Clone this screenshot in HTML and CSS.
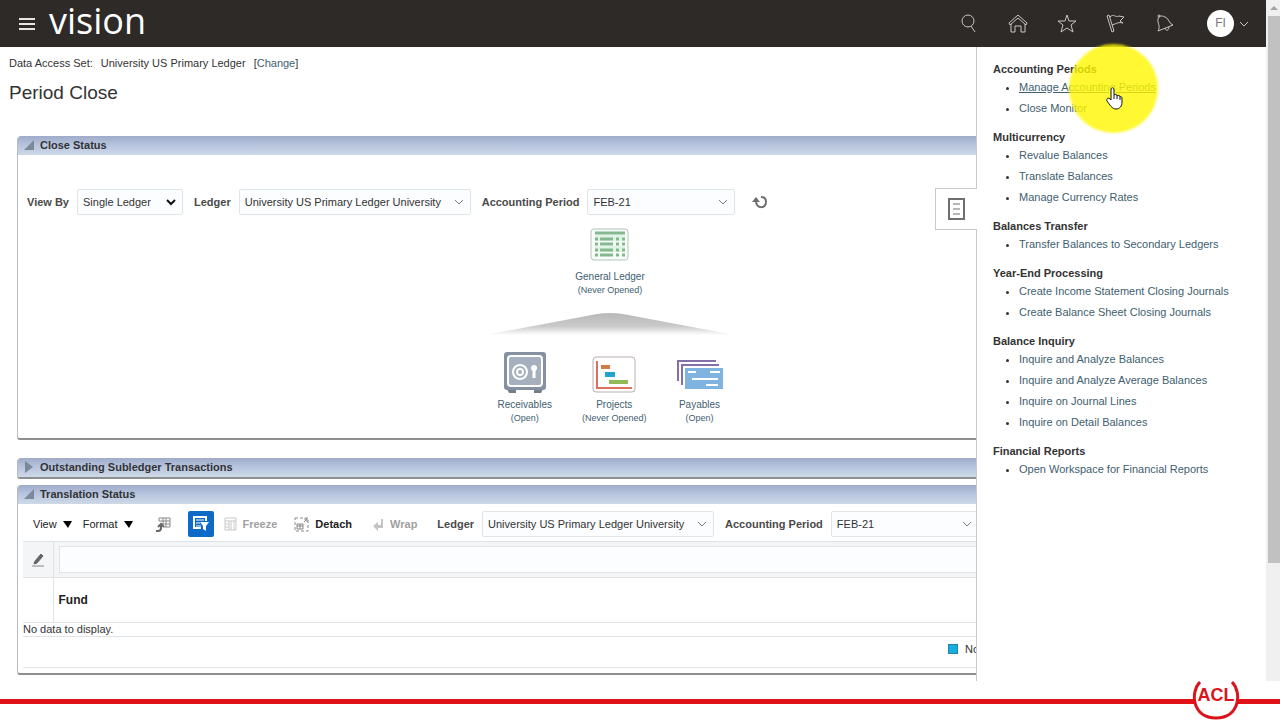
FILE: index.html
```html
<!DOCTYPE html>
<html lang="en">
<head>
<meta charset="utf-8">
<title>Period Close</title>
<link rel="stylesheet" href="styles.css">
</head>
<body>
<div class="viewport">
  <div class="app">
    <header class="topbar">
      <button class="icon-btn" aria-label="Navigator"><svg width="18" height="14" viewBox="0 0 18 14" stroke="#e8e6e4" stroke-width="2"><path d="M1 2h16M1 7h16M1 12h16"/></svg></button>
      <span class="brand">vision</span>
      <nav class="tools" aria-label="Global">
        <button class="icon-btn" aria-label="Search"><svg width="20" height="20" viewBox="0 0 20 20"><circle cx="9" cy="7" r="6"/><path d="M12 12l4 6"/></svg></button>
        <button class="icon-btn" aria-label="Home"><svg width="20" height="20" viewBox="0 0 20 20"><path d="M1 9l9-8 9 8-1 2-8-7-8 7zM3 10v8h4v-6h6v6h4v-8"/></svg></button>
        <button class="icon-btn" aria-label="Favorites"><svg width="20" height="20" viewBox="0 0 20 20"><path d="M10 1l2 6h7l-5 4 2 7-6-4-6 4 2-7-5-4h7z"/></svg></button>
        <button class="icon-btn" aria-label="Watchlist"><svg width="20" height="20" viewBox="0 0 20 20"><path d="M1 2l2-1 5 16-2 1zM4 3c4-4 5 1 9-1l5 1-4 4 3 2c-5-1-5 0-11 2"/></svg></button>
        <button class="icon-btn" aria-label="Notifications"><svg width="20" height="20" viewBox="0 0 20 20"><path d="M3 17l15-6c-4-1-4-7-8-8C6 1 4 2 3 5c-1 4 3 7 0 12zM10 14c1 4 4 2 4-1"/><circle cx="4" cy="2" r="1"/></svg></button>
        <button class="user" aria-label="Account menu"><span class="avatar">FI</span><svg width="10" height="6" viewBox="0 0 10 6"><path d="M1 1l4 4 4-4"/></svg></button>
      </nav>
    </header>
    <div class="content">
      <main class="main">
        <div class="access"><span>Data Access Set:</span><span>University US Primary Ledger</span><span>[<a href="#">Change</a>]</span></div>
        <h1>Period Close</h1>

        <section class="panel">
          <h2 class="bar"><svg width="10" height="10" viewBox="0 0 10 10"><path d="M10 0v10H0z" fill="#7d8898"/></svg>Close Status</h2>
          <div class="close-body">
            <div class="fields">
              <label for="viewby">View By</label>
              <span class="field field-s"><select id="viewby"><option>Single Ledger</option></select><svg class="chev dark" width="10" height="7" viewBox="0 0 10 7"><path d="M1 1l4 4 4-4"/></svg></span>
              <label class="spaced" for="ledger1">Ledger</label>
              <span class="field field-l"><input id="ledger1" value="University US Primary Ledger University"><button class="chev" aria-label="Open ledgers"><svg width="10" height="6" viewBox="0 0 10 6"><path d="M1 1l4 4 4-4"/></svg></button></span>
              <label class="spaced" for="period1">Accounting Period</label>
              <span class="field field-m"><input id="period1" value="FEB-21"><button class="chev" aria-label="Open periods"><svg width="10" height="6" viewBox="0 0 10 6"><path d="M1 1l4 4 4-4"/></svg></button></span>
              <button class="refresh" aria-label="Refresh"><svg width="16" height="14" viewBox="0 0 16 14"><path d="M4 6c0 8 10 8 10 1 0-3-2-5-5-5" fill="none" stroke="#6d6d6d" stroke-width="2"/><path d="M0 7l4-5 4 5z" fill="#6d6d6d"/></svg></button>
            </div>
            <div class="map">
              <a class="node" href="#">
                <svg width="40" height="34" viewBox="0 0 40 34"><rect x="1" y="1" width="37" height="31" rx="3" fill="#f7fdf8" stroke="#b7c1ba"/><g stroke="#e0f5e4" stroke-width="6"><path d="M5 10h30M5 21h30"/></g><g stroke="#84b990" stroke-width="3"><path d="M5 5h30"/><path d="M5 11h30M5 16h30M5 22h30M5 27h30" stroke-dasharray="3 2 13 3 3 3 3 9"/></g></svg>
                <span>General Ledger</span><small>(Never Opened)</small>
              </a>
              <svg class="roof" width="250" height="22" viewBox="0 0 250 22"><defs><linearGradient id="rg" x1="0" y1="0" x2="0" y2="1"><stop offset="0" stop-color="#b8b8b8"/><stop offset=".6" stop-color="#cacaca"/><stop offset="1" stop-color="#fff"/></linearGradient></defs><path d="M0 22L112 1q13-2 26 0l112 21z" fill="url(#rg)"/></svg>
              <div class="branches">
                <a class="node" href="#">
                  <svg width="42" height="42" viewBox="0 0 42 42"><path d="M3 37h9v4H5zM30 37h9l-2 4h-7z" fill="#737e8b"/><rect width="42" height="38" rx="3" fill="#8590a0"/><rect x="4" y="4" width="34" height="30" rx="3" fill="#a5afbd" stroke="#fff" stroke-width="2"/><g fill="none" stroke="#fff" stroke-width="2"><circle cx="16" cy="20" r="7"/><circle cx="16" cy="20" r="3"/></g><circle cx="30" cy="16" r="3" fill="#fff"/><path d="M30 17v9" stroke="#fff" stroke-width="3"/></svg>
                  <span>Receivables</span><small>(Open)</small>
                </a>
                <a class="node" href="#">
                  <svg width="44" height="38" viewBox="0 0 44 38"><rect x="1" y="1" width="42" height="35" rx="3" fill="#fff" stroke="#bcaeb0"/><path d="M5 5v27h35" fill="none" stroke="#dc6f5d" stroke-width="2"/><path d="M9 9h9v4H9z" fill="#cf7d46"/><path d="M13 16h10v5H13z" fill="#20a4cd"/><path d="M17 24h19v4H17z" fill="#8fba55"/></svg>
                  <span>Projects</span><small>(Never Opened)</small>
                </a>
                <a class="node" href="#">
                  <svg width="46" height="36" viewBox="0 0 46 36"><path d="M1 23V3h38M5 27V7h37" fill="none" stroke="#846fab" stroke-width="2"/><rect x="8" y="10" width="38" height="21" fill="#7eb4df"/><path d="M11 14h8M33 14h10M15 21h26M29 27h12" stroke="#fff" stroke-width="2"/></svg>
                  <span>Payables</span><small>(Open)</small>
                </a>
              </div>
            </div>
          </div>
        </section>

        <section class="panel">
          <h2 class="bar"><svg width="10" height="12" viewBox="0 0 10 12"><path d="M1 0l8 6-8 6z" fill="#7d8898"/></svg>Outstanding Subledger Transactions</h2>
        </section>

        <section class="panel">
          <h2 class="bar"><svg width="10" height="10" viewBox="0 0 10 10"><path d="M10 0v10H0z" fill="#7d8898"/></svg>Translation Status</h2>
          <div class="table-body">
            <div class="toolbar">
              <button class="menu">View<svg width="9" height="7" viewBox="0 0 9 7"><path d="M0 0h9L5 7z"/></svg></button>
              <button class="menu">Format<svg width="9" height="7" viewBox="0 0 9 7"><path d="M0 0h9L5 7z"/></svg></button>
              <button class="export" aria-label="Export"><svg width="15" height="15" viewBox="0 0 15 15" fill="none" stroke="#888"><path d="M3 4V1h11v9H8M3 4h11M7 1v6M10 1v9M6 7h8"/><path d="M0 14h2c2 0 3-1 3-3V8M2 10l3-3 3 3" stroke="#666" stroke-width="2"/></svg></button>
              <button class="filter" aria-label="Query by example"><svg width="16" height="16" viewBox="0 0 16 16" fill="none" stroke="#fff"><path d="M13 5V1H1v11h7" stroke-width="2"/><path d="M3 4h8M3 7h4M3 10h5"/><path d="M7 6h9l-3 4v5l-3-2v-3z" fill="#fff" stroke="none"/></svg></button>
              <button class="tool" disabled><svg width="13" height="14" viewBox="0 0 13 14" fill="none" stroke="#c9c9c9"><path d="M1 1h11v12H1zM1 4h11M1 7h4M1 10h4M5 4v9M7 4v9M10 4v9"/></svg>Freeze</button>
              <button class="tool strong"><svg width="15" height="15" viewBox="0 0 15 15" fill="none" stroke="#888"><path d="M1 1h13v13H1z" stroke-dasharray="3 2"/><path d="M3 7h6v5H3zM3 9h6M6 7v5M10 5l3-3M10 2h3v3"/></svg>Detach</button>
              <button class="tool last" disabled><svg width="12" height="13" viewBox="0 0 12 13"><path d="M9 1h2v9H6v3L1 8l5-4v3h3z" fill="#c4c4c4"/></svg>Wrap</button>
              <label for="ledger2">Ledger</label>
              <span class="field field-l"><input id="ledger2" value="University US Primary Ledger University"><button class="chev" aria-label="Open ledgers"><svg width="10" height="6" viewBox="0 0 10 6"><path d="M1 1l4 4 4-4"/></svg></button></span>
              <label class="spaced" for="period2">Accounting Period</label>
              <span class="field field-m"><input id="period2" value="FEB-21"><button class="chev" aria-label="Open periods"><svg width="10" height="6" viewBox="0 0 10 6"><path d="M1 1l4 4 4-4"/></svg></button></span>
            </div>
            <table class="grid">
              <thead>
                <tr class="qbe"><td class="sel"><button aria-label="Clear filter"><svg width="12" height="14" viewBox="0 0 12 14"><path d="M9 1l2 2-6 7-3 1 1-3z" fill="#666" stroke="#666"/><path d="M0 13h12" stroke="#888"/></svg></button></td><td><input aria-label="Filter by fund"></td></tr>
                <tr class="head"><td class="sel"></td><th scope="col">Fund</th></tr>
              </thead>
              <tbody><tr><td class="empty" colspan="2">No data to display.</td></tr></tbody>
            </table>
            <div class="legend"><i></i>No</div>
          </div>
        </section>
      </main>

      <aside class="drawer">
        <button class="drawer-tab" aria-label="Tasks"><svg width="17" height="22" viewBox="0 0 17 22" fill="none" stroke="#6f6f6f" stroke-width="2"><path d="M1 1h15v20H1z"/><path d="M5 6h7M5 11h7M5 16h7" stroke-width="1"/></svg></button>
        <h3>Accounting Periods</h3>
        <ul><li><a class="active" href="#">Manage Accounting Periods</a></li><li><a href="#">Close Monitor</a></li></ul>
        <h3>Multicurrency</h3>
        <ul><li><a href="#">Revalue Balances</a></li><li><a href="#">Translate Balances</a></li><li><a href="#">Manage Currency Rates</a></li></ul>
        <h3>Balances Transfer</h3>
        <ul><li><a href="#">Transfer Balances to Secondary Ledgers</a></li></ul>
        <h3>Year-End Processing</h3>
        <ul><li><a href="#">Create Income Statement Closing Journals</a></li><li><a href="#">Create Balance Sheet Closing Journals</a></li></ul>
        <h3>Balance Inquiry</h3>
        <ul><li><a href="#">Inquire and Analyze Balances</a></li><li><a href="#">Inquire and Analyze Average Balances</a></li><li><a href="#">Inquire on Journal Lines</a></li><li><a href="#">Inquire on Detail Balances</a></li></ul>
        <h3>Financial Reports</h3>
        <ul><li><a href="#">Open Workspace for Financial Reports</a></li></ul>
        <div class="spotlight"></div>
        <svg class="pointer" width="17" height="23" viewBox="0 0 17 23"><path d="M5 13V3c0-3 3-3 3 0v5c1-1 3-1 3 1 1-1 3-1 3 1 1-1 2 0 2 1v4c0 4-2 7-6 7-4 0-6-4-9-8-1-3 2-4 4-1z" fill="#fff" stroke="#111"/><path d="M8 8v4M11 9v3M14 10v3" stroke="#111"/></svg>
      </aside>
    </div>
  </div>
  <div class="scrollbar"><svg width="8" height="4" viewBox="0 0 8 4"><path d="M0 4l4-4 4 4z" fill="#a3a3a3"/></svg><div class="thumb"></div></div>
</div>
<footer class="footer">
  <div class="logo"><svg width="48" height="39" viewBox="0 0 48 39"><path d="M8 1C-2 11 0 37 24 37S50 11 40 1" fill="#fff" stroke="#d9151b" stroke-width="3"/></svg><span>ACL</span></div>
</footer>
</body>
</html>
```
FILE: styles.css
```css
* { box-sizing: border-box; }
body {
  margin: 0;
  min-height: 100vh;
  display: flex;
  flex-direction: column;
  background: #fff;
  color: #333;
  font: 11px/16px "Liberation Sans", Arial, sans-serif;
}
button, input, select { font: inherit; color: inherit; }
button { display: flex; flex: none; align-items: center; padding: 0; border: 0; background: none; }
a { color: #41606f; text-decoration: none; }
h1, h2, h3, ul { margin: 0; padding: 0; }
svg { display: block; flex: none; }

.viewport { flex: 1; display: flex; }
.app { flex: 1; min-width: 0; display: flex; flex-direction: column; }

.topbar { height: 47px; flex: none; display: flex; align-items: center; padding: 0 17px 0 18px; background: #2e2a27; }
.brand { margin-left: 13px; padding-bottom: 5px; color: #fff; font: 36px/42px "Open Sans", "Noto Sans", sans-serif; }
.tools { margin-left: auto; display: flex; align-items: center; gap: 29px; }
.tools svg { fill: none; stroke: #c9c5c1; stroke-width: 1; }
.user { gap: 5px; margin-left: 3px; }
.avatar { width: 27px; height: 27px; border-radius: 50%; background: #fff; color: #777; font-size: 12px; line-height: 27px; text-align: center; }

.content { flex: 1; display: flex; }
.main { flex: 1; min-width: 0; overflow: hidden; padding: 8px 0 0 17px; }
.access { display: flex; gap: 8px; margin-left: -8px; }
h1 { margin: 8px 0 29px -8px; font-size: 19px; line-height: 28px; font-weight: 400; }

.panel { margin-bottom: 6px; border: solid #b5bcc4; border-width: 0 0 0 1px; border-bottom: 2px solid #8f8f8f; border-radius: 4px 0 0 3px; overflow: hidden; }
.panel:first-of-type { margin-bottom: 18px; }
.panel:last-of-type { margin-bottom: 0; }
.bar { display: flex; align-items: center; gap: 6px; height: 19px; padding: 0 0 1px 6px; background: linear-gradient(#9fabc8, #b3c1dd 40%, #ced9e7); font-size: 11px; line-height: 18px; }

.close-body { height: 283px; padding: 34px 0 0 9px; }
.fields, .toolbar { display: flex; align-items: center; white-space: nowrap; }
label { flex: none; font-weight: 700; color: #4a4a4a; margin-right: 8px; }
.spaced { margin-left: 11px; }
.field { flex: none; display: flex; align-items: center; height: 26px; padding: 0 6px 0 5px; border: 1px solid #dfe4e7; border-radius: 2px; background: #fcfdfe; }
.field-s { width: 106px; }
.field-m { width: 148px; }
.field-l { width: 232px; }
.field input, .field select { flex: 1; min-width: 0; height: 24px; padding: 0; border: 0; background: none; appearance: none; outline: 0; }
.chev svg, svg.chev { fill: none; stroke: #808080; }
svg.chev.dark { margin-left: -10px; stroke: #111; stroke-width: 2; pointer-events: none; }
.refresh { margin-left: 17px; }

.map { width: 250px; margin: 13px 0 0 458px; display: flex; flex-direction: column; align-items: center; }
.node { display: flex; flex-direction: column; align-items: center; font-size: 10px; line-height: 14px; }
.node small { font-size: 9px; line-height: 13px; }
.map > .node svg { margin-bottom: 8px; }
.roof { margin: 16px 0 17px; }
.branches { display: flex; align-items: flex-end; gap: 30px; }
.branches svg { margin-bottom: 4px; }

.table-body { padding: 0 0 5px 5px; }
.toolbar { height: 37px; padding: 3px 0 0 10px; }
.menu { gap: 6px; margin-right: 11px; color: #222; }
.export { margin: 0 17px 0 12px; }
.filter { justify-content: center; width: 26px; height: 26px; margin-right: 10px; border-radius: 2px; background: #0d6ac8; }
.tool { gap: 6px; margin-right: 17px; font-weight: 700; color: #a0a0a0; }
.tool.strong { color: #222; margin-right: 20px; }
.tool.last { margin-right: 20px; }

.grid { width: 100%; border-collapse: collapse; }
.grid td, .grid th { padding: 0; text-align: left; border: 0 solid #dfe3e6; border-width: 1px 0; }
.grid .sel { width: 30px; border-right-width: 1px; }
.qbe { height: 36px; background: #f4f5f7; }
.qbe button { margin: 0 auto; }
.qbe td:last-child { padding-left: 5px; }
.qbe input { display: block; width: 100%; height: 27px; border: 1px solid #dfe3e6; border-right: 0; background: #fcfdfe; }
.head { height: 45px; font-size: 12px; color: #222; }
.grid .head th { padding-left: 5px; }
.empty { line-height: 13px; }
.legend { display: flex; align-items: center; justify-content: flex-end; gap: 7px; height: 31px; padding: 0 0 7px; margin-right: -3px; border-bottom: 1px solid #e4e6e8; }
.legend i { width: 10px; height: 10px; border: 1px solid #2383a5; background: #14aee0; }

.drawer { position: relative; flex: none; width: 290px; padding: 14px 0 0 16px; border-left: 1px solid #c8c8c8; background: #fff; }
.drawer h3 { font-size: 11px; line-height: 16px; }
.drawer ul { margin-bottom: 10px; padding-left: 26px; }
.drawer li { line-height: 21px; }
.active { text-decoration: underline; }
.drawer-tab { position: absolute; left: -42px; top: 141px; width: 42px; height: 42px; justify-content: center; border: 1px solid #c8c8c8; border-right: 0; background: #fff; }
.spotlight { position: absolute; left: 92px; top: -3px; width: 89px; height: 89px; border-radius: 50%; background: #fff700; opacity: .8; filter: blur(1px); }
.pointer { position: absolute; left: 129px; top: 40px; }

.scrollbar { width: 14px; flex: none; display: flex; flex-direction: column; align-items: center; padding: 6px 0 0 2px; background: #f0f0f0; }
.thumb { width: 100%; height: 81%; margin-top: 6px; background: #c1c1c1; }

.footer { position: relative; height: 39px; flex: none; padding-top: 18px; }
.footer::before { content: ""; display: block; height: 5px; background: #e01217; }
.logo { position: absolute; right: 40px; top: 0; width: 48px; height: 39px; }
.logo span { position: absolute; left: 0; right: 0; top: 4px; text-align: center; color: #d9151b; font-size: 18px; line-height: 20px; font-weight: 900; }
```
